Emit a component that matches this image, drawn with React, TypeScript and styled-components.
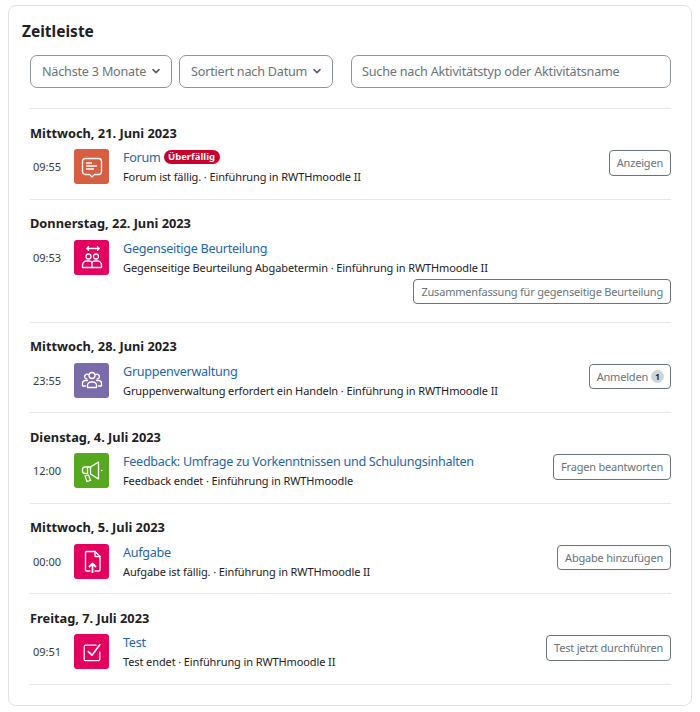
import React from 'react'
import styled, { createGlobalStyle } from 'styled-components'

const GlobalStyle = createGlobalStyle`
  html, body {
    margin: 0;
    padding: 0;
    background: #fff;
    font-family: 'Noto Sans', 'Open Sans', sans-serif;
    color: #1d2125;
  }
`

const Page = styled.div`
  width: 700px;
  height: 712px;
  padding: 5px 8px 6px;
  box-sizing: border-box;
`

const Card = styled.section`
  height: 100%;
  box-sizing: border-box;
  border: 1px solid #dfe2e6;
  border-radius: 8px;
  padding: 13px 20px 0 13px;
`

const Title = styled.h2`
  margin: 0;
  font-size: 15.5px;
  line-height: 24px;
  font-weight: 700;
`

const Filters = styled.div`
  display: flex;
  margin: 12px 0 20.5px 8px;
  gap: 7px;
`

const Select = styled.button<{ $width: number }>`
  display: flex;
  align-items: center;
  justify-content: space-between;
  width: ${(p) => p.$width}px;
  height: 32.5px;
  padding: 0 10px 0 11px;
  box-sizing: border-box;
  background: #fff;
  border: 1px solid #8f959e;
  border-radius: 7px;
  color: #6a737b;
  font: 400 12.6px 'Noto Sans', sans-serif;
  letter-spacing: -0.2px;
  white-space: nowrap;
`

const Search = styled.input`
  flex: 1;
  min-width: 0;
  height: 32.5px;
  margin-left: 11px;
  padding: 0 10px;
  box-sizing: border-box;
  border: 1px solid #8f959e;
  border-radius: 7px;
  font: 400 12.6px 'Noto Sans', sans-serif;
  letter-spacing: -0.2px;
  &::placeholder {
    color: #6a737b;
    opacity: 1;
  }
`

const Section = styled.div`
  margin-left: 8px;
  border-top: 1px solid #e4e6e9;
  padding: 14.5px 0 14.5px;
  &:last-child {
    border-bottom: 1px solid #e4e6e9;
  }
`

const DateLine = styled.h5`
  margin: 0 0 7.5px;
  font-size: 12.8px;
  line-height: 18px;
  font-weight: 700;
`

const Row = styled.div`
  display: flex;
  align-items: flex-start;
`

const Time = styled.span`
  width: 44px;
  height: 35px;
  padding-left: 3px;
  box-sizing: border-box;
  font-size: 11px;
  line-height: 36px;
  color: #343a40;
`

const IconBox = styled.div<{ $bg: string }>`
  flex: none;
  width: 35px;
  height: 35px;
  display: flex;
  align-items: center;
  justify-content: center;
  border-radius: 3px;
  background: ${(p) => p.$bg};
  svg {
    display: block;
    fill: none;
    stroke: #fff;
    stroke-width: 1.3;
    stroke-linecap: round;
    stroke-linejoin: round;
  }
`

const Body = styled.div`
  flex: 1;
  min-width: 0;
  height: 35px;
  margin-left: 14px;
`

const NameLine = styled.div`
  display: flex;
  align-items: center;
  gap: 3px;
  height: 18px;
`

const Name = styled.a`
  color: #1f66ad;
  font-size: 12.6px;
  letter-spacing: -0.28px;
  line-height: 18px;
`

const Badge = styled.span`
  height: 14px;
  padding: 0 4.5px;
  margin-top: -2px;
  border-radius: 7px;
  background: #c8002b;
  color: #fff;
  font-size: 9.5px;
  font-weight: 700;
  line-height: 14px;
`

const Detail = styled.div`
  margin-top: 3px;
  font-size: 11px;
  letter-spacing: -0.11px;
  line-height: 14px;
  white-space: nowrap;
`

const Action = styled.button`
  flex: none;
  height: 25.5px;
  padding: 0 7px;
  display: inline-flex;
  align-items: center;
  gap: 3px;
  background: #fff;
  border: 1px solid #6a737b;
  border-radius: 4px;
  color: #6a737b;
  font: 400 11px 'Noto Sans', sans-serif;
  letter-spacing: -0.2px;
`

const SideAction = styled(Action)`
  margin-top: 1px;
  margin-left: 8px;
`

const Footer = styled.div`
  display: flex;
  justify-content: flex-end;
  margin-top: 4px;
  margin-bottom: 3px;
`

const Count = styled.span`
  width: 13px;
  height: 13px;
  margin-right: -1px;
  border-radius: 50%;
  background: #ced4da;
  color: #1d2125;
  font-size: 8px;
  font-weight: 700;
  line-height: 13px;
  text-align: center;
`

const Chevron = () => (
  <svg width="10" height="10" viewBox="0 0 10 10" fill="none" stroke="#5a6269" strokeWidth="1.6" strokeLinecap="round" strokeLinejoin="round">
    <path d="M2 3.600 5 6.600 8 3.600" />
  </svg>
)

const ForumIcon = () => (
  <svg width="24" height="24" viewBox="0 0 24 24">
    <path d="M5.500 3.500h13a3 3 0 0 1 3 3v10a3 3 0 0 1-3 3h-4L12 22l-2.500-2.500h-4a3 3 0 0 1-3-3v-10a3 3 0 0 1 3-3z" />
    <path d="M6.500 8h5M6.500 11h10M6.500 14h7" />
  </svg>
)

const PeerIcon = () => (
  <svg width="24" height="24" viewBox="0 0 24 24">
    <path d="M7 3.500h12M8.500 1.800 6.800 3.500l1.700 1.700M17.500 1.800l1.700 1.700-1.700 1.700" />
    <circle cx="8.500" cy="11.500" r="2.500" />
    <circle cx="16" cy="11.500" r="2.500" />
    <path d="M2.500 22.500v-2.500a4 4 0 0 1 4-4h3a3 3 0 0 1 2.500 1.500 3 3 0 0 1 2.500-1.500h3a4 4 0 0 1 4 4v2.500z" />
    <path d="M12 17.500v5" />
  </svg>
)

const GroupIcon = () => (
  <svg width="24" height="24" viewBox="0 0 24 24">
    <circle cx="12" cy="7.500" r="3" />
    <path d="M6.800 11a2.400 2.400 0 1 1 1.500-4.400M17.200 11a2.400 2.400 0 1 0-1.500-4.400" />
    <path d="M7.500 19.500v-2a3.500 3.500 0 0 1 3.500-3.500h2a3.500 3.500 0 0 1 3.500 3.500v2z" />
    <path d="M5.500 18H2.500v-2.500a3 3 0 0 1 3-3h2M18.500 18h3v-2.500a3 3 0 0 0-3-3h-2" />
  </svg>
)

const FeedbackIcon = () => (
  <svg width="24" height="24" viewBox="0 0 24 24">
    <path d="M10.500 8 18.500 3v17l-8-5z" />
    <path d="M10.500 8H5a2.500 2.500 0 0 0-2.500 2.500v1.500A2.500 2.500 0 0 0 5 14.500h2.500V8" />
    <path d="M5 17l3.500-1 2 5.500-3.500 1z" />
    <path d="M21.500 11.500h.4" />
  </svg>
)

const AssignIcon = () => (
  <svg width="24" height="24" viewBox="0 0 24 24">
    <path d="M10 22H6.500a1 1 0 0 1-1-1V3.500a1 1 0 0 1 1-1H15l5 5V21a1 1 0 0 1-1 1h-4" />
    <path d="M15 2.500v5h5" />
    <path d="M12.500 24V14.500M9.500 17.500l3-3 3 3" strokeWidth="1.800" />
  </svg>
)

const QuizIcon = () => (
  <svg width="22" height="22" viewBox="0 0 24 24">
    <path d="M16.500 4.500H5a1.500 1.500 0 0 0-1.500 1.500v14A1.500 1.500 0 0 0 5 21.500h14a1.500 1.500 0 0 0 1.500-1.500v-8" />
    <path d="M8 11.500l4 4L20.500 4" strokeWidth="1.800" />
  </svg>
)

const PINK = '#e4005f'

type Item = {
  date: string
  time: string
  color: string
  icon: React.ReactNode
  name: string
  overdue?: boolean
  detail: string
  action: React.ReactNode
  below?: boolean
}

const items: Item[] = [
  {
    date: 'Mittwoch, 21. Juni 2023',
    time: '09:55',
    color: '#d75e40',
    icon: <ForumIcon />,
    name: 'Forum',
    overdue: true,
    detail: 'Forum ist fällig. · Einführung in RWTHmoodle II',
    action: 'Anzeigen',
  },
  {
    date: 'Donnerstag, 22. Juni 2023',
    time: '09:53',
    color: PINK,
    icon: <PeerIcon />,
    name: 'Gegenseitige Beurteilung',
    detail: 'Gegenseitige Beurteilung Abgabetermin · Einführung in RWTHmoodle II',
    action: 'Zusammenfassung für gegenseitige Beurteilung',
    below: true,
  },
  {
    date: 'Mittwoch, 28. Juni 2023',
    time: '23:55',
    color: '#7a6cab',
    icon: <GroupIcon />,
    name: 'Gruppenverwaltung',
    detail: 'Gruppenverwaltung erfordert ein Handeln · Einführung in RWTHmoodle II',
    action: (
      <>
        Anmelden <Count>1</Count>
      </>
    ),
  },
  {
    date: 'Dienstag, 4. Juli 2023',
    time: '12:00',
    color: '#57a821',
    icon: <FeedbackIcon />,
    name: 'Feedback: Umfrage zu Vorkenntnissen und Schulungsinhalten',
    detail: 'Feedback endet · Einführung in RWTHmoodle',
    action: 'Fragen beantworten',
  },
  {
    date: 'Mittwoch, 5. Juli 2023',
    time: '00:00',
    color: PINK,
    icon: <AssignIcon />,
    name: 'Aufgabe',
    detail: 'Aufgabe ist fällig. · Einführung in RWTHmoodle II',
    action: 'Abgabe hinzufügen',
  },
  {
    date: 'Freitag, 7. Juli 2023',
    time: '09:51',
    color: PINK,
    icon: <QuizIcon />,
    name: 'Test',
    detail: 'Test endet · Einführung in RWTHmoodle II',
    action: 'Test jetzt durchführen',
  },
]

export default function App() {
  return (
    <Page>
      <GlobalStyle />
      <Card>
        <Title>Zeitleiste</Title>
        <Filters>
          <Select $width={142}>
            Nächste 3 Monate
            <Chevron />
          </Select>
          <Select $width={154}>
            Sortiert nach Datum
            <Chevron />
          </Select>
          <Search placeholder="Suche nach Aktivitätstyp oder Aktivitätsname" />
        </Filters>
        {items.map((item) => (
          <Section key={item.date}>
            <DateLine>{item.date}</DateLine>
            <Row>
              <Time>{item.time}</Time>
              <IconBox $bg={item.color}>{item.icon}</IconBox>
              <Body>
                <NameLine>
                  <Name>{item.name}</Name>
                  {item.overdue && <Badge>Überfällig</Badge>}
                </NameLine>
                <Detail>{item.detail}</Detail>
              </Body>
              {!item.below && <SideAction>{item.action}</SideAction>}
            </Row>
            {item.below && (
              <Footer>
                <Action>{item.action}</Action>
              </Footer>
            )}
          </Section>
        ))}
      </Card>
    </Page>
  )
}
